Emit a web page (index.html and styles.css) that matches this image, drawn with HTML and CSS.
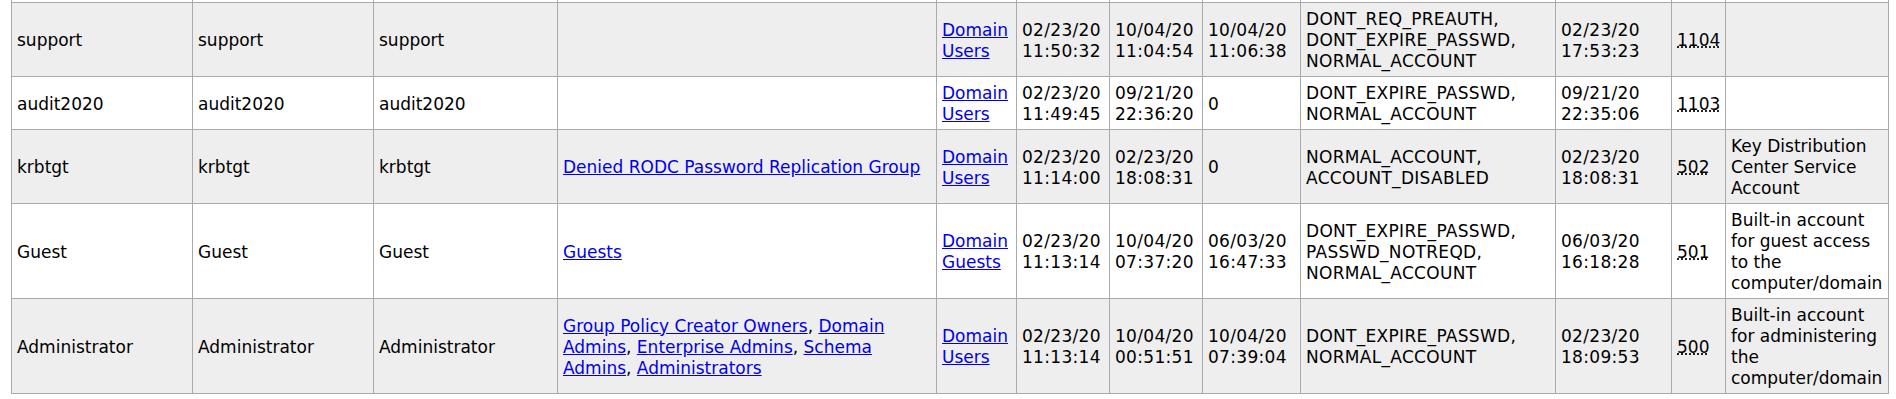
FILE: index.html
```html
<!DOCTYPE html>
<html lang="en">
<head>
<meta charset="utf-8">
<title>Domain users</title>
<link rel="stylesheet" href="styles.css">
</head>
<body>
<div class="wrap">
<table class="users">
<colgroup>
<col class="c-name"><col class="c-name"><col class="c-sam"><col class="c-groups"><col class="c-primary">
<col class="c-date"><col class="c-date"><col class="c-logon"><col class="c-flags"><col class="c-pwd"><col class="c-rid"><col class="c-desc">
</colgroup>
<tbody>
<tr class="cut"><td>&nbsp;</td><td></td><td></td><td></td><td></td><td></td><td></td><td></td><td></td><td></td><td></td><td></td></tr>
<tr class="alt">
<td>support</td><td>support</td><td>support</td><td></td>
<td><a href="#">Domain Users</a></td>
<td class="num">02/23/20 11:50:32</td><td class="num">10/04/20 11:04:54</td><td class="num">10/04/20 11:06:38</td>
<td class="flags">DONT_REQ_PREAUTH, DONT_EXPIRE_PASSWD, NORMAL_ACCOUNT</td>
<td class="num">02/23/20 17:53:23</td><td><abbr title="S-1-5-21-1104">1104</abbr></td><td></td>
</tr>
<tr>
<td>audit2020</td><td>audit2020</td><td>audit2020</td><td></td>
<td><a href="#">Domain Users</a></td>
<td class="num">02/23/20 11:49:45</td><td class="num">09/21/20 22:36:20</td><td class="num">0</td>
<td class="flags">DONT_EXPIRE_PASSWD, NORMAL_ACCOUNT</td>
<td class="num">09/21/20 22:35:06</td><td><abbr title="S-1-5-21-1103">1103</abbr></td><td></td>
</tr>
<tr class="alt">
<td>krbtgt</td><td>krbtgt</td><td>krbtgt</td>
<td><a href="#">Denied RODC Password Replication Group</a></td>
<td><a href="#">Domain Users</a></td>
<td class="num">02/23/20 11:14:00</td><td class="num">02/23/20 18:08:31</td><td class="num">0</td>
<td class="flags">NORMAL_ACCOUNT, ACCOUNT_DISABLED</td>
<td class="num">02/23/20 18:08:31</td><td><abbr title="S-1-5-21-502">502</abbr></td>
<td>Key Distribution Center Service Account</td>
</tr>
<tr>
<td>Guest</td><td>Guest</td><td>Guest</td>
<td><a href="#">Guests</a></td>
<td><a href="#">Domain Guests</a></td>
<td class="num">02/23/20 11:13:14</td><td class="num">10/04/20 07:37:20</td><td class="num">06/03/20 16:47:33</td>
<td class="flags">DONT_EXPIRE_PASSWD, PASSWD_NOTREQD, NORMAL_ACCOUNT</td>
<td class="num">06/03/20 16:18:28</td><td><abbr title="S-1-5-21-501">501</abbr></td>
<td>Built-in account for guest access to the computer/domain</td>
</tr>
<tr class="alt">
<td>Administrator</td><td>Administrator</td><td>Administrator</td>
<td><a href="#">Group Policy Creator Owners</a>, <a href="#">Domain Admins</a>, <a href="#">Enterprise Admins</a>, <a href="#">Schema Admins</a>, <a href="#">Administrators</a></td>
<td><a href="#">Domain Users</a></td>
<td class="num">02/23/20 11:13:14</td><td class="num">10/04/20 00:51:51</td><td class="num">10/04/20 07:39:04</td>
<td class="flags">DONT_EXPIRE_PASSWD, NORMAL_ACCOUNT</td>
<td class="num">02/23/20 18:09:53</td><td><abbr title="S-1-5-21-500">500</abbr></td>
<td>Built-in account for administering the computer/domain</td>
</tr>
</tbody>
</table>
</div>
</body>
</html>
```
FILE: styles.css
```css
html, body {
  margin: 0;
  padding: 0;
  background: #ffffff;
}
body {
  font-family: "DejaVu Sans", Verdana, sans-serif;
  font-size: 17px;
  line-height: 21px;
  color: #000000;
}
.wrap {
  padding: 0 8px 0 11px;
}
.users {
  border-collapse: collapse;
  table-layout: fixed;
  width: 1878px;
  margin-top: -30px;
}
.users td {
  border: 1px solid #aaaaaa;
  padding: 6px 5px 4px;
  vertical-align: middle;
  text-align: left;
}
.users tr.alt td {
  background: #eeeeee;
}
.users td.flags {
  letter-spacing: 0.3px;
}
.users td.num {
  letter-spacing: 0.3px;
}
.users a {
  color: #0000ee;
  text-decoration: underline;
}
.users abbr {
  text-decoration: underline dotted;
}
.c-name { width: 181px; }
.c-sam { width: 184px; }
.c-groups { width: 379px; }
.c-primary { width: 80px; }
.c-date { width: 93px; }
.c-logon { width: 98px; }
.c-flags { width: 255px; }
.c-pwd { width: 116px; }
.c-rid { width: 54px; }
.c-desc { width: 163px; }
```
